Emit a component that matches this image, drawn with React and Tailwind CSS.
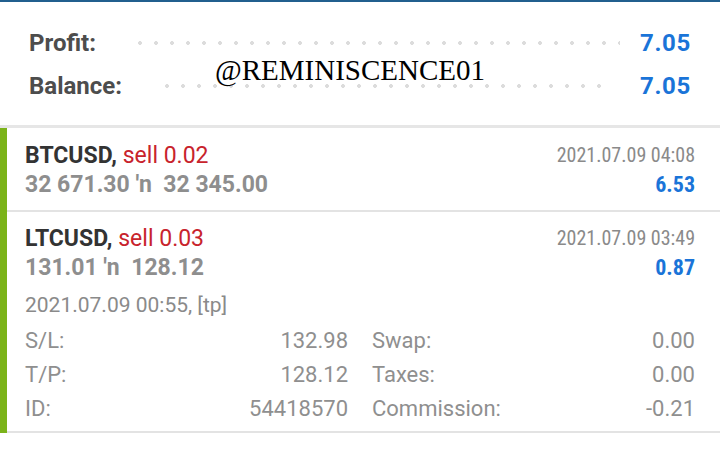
const details = [
  ['S/L:', '132.98', 'Swap:', '0.00'],
  ['T/P:', '128.12', 'Taxes:', '0.00'],
  ['ID:', '54418570', 'Commission:', '-0.21'],
]

function Dots({ className }) {
  return (
    <div
      className={`h-[6px] flex-1 bg-[radial-gradient(circle,#dcdcdc_1.6px,transparent_2.2px)] bg-[length:16px_6px] bg-repeat-x ${className}`}
    />
  )
}

function SummaryRow({ label, value, dotsClass }) {
  return (
    <div className="flex h-[43px] items-center">
      <span className="text-[24px] font-bold text-[#4d4d4d]">{label}</span>
      <Dots className={dotsClass} />
      <span className="text-[24px] font-bold tracking-[0.7px] text-[#1a74d8]">{value}</span>
    </div>
  )
}

function PositionHead({ symbol, side, from, to, time, profit }) {
  return (
    <>
      <div className="flex items-center justify-between leading-[29px]">
        <span className="text-[23px]">
          <span className="font-bold text-[#333]">{symbol}, </span>
          <span className="text-[#c8232c]">{side}</span>
        </span>
        <span className="text-[20px] text-[#8a8a8a] [font-stretch:condensed]">{time}</span>
      </div>
      <div className="flex items-center justify-between leading-[29px]">
        <span className="text-[23px] font-bold text-[#8e8e8e]">
          {from} ′n&nbsp; {to}
        </span>
        <span className="text-[22px] font-bold text-[#1a74d8] [font-stretch:condensed]">{profit}</span>
      </div>
    </>
  )
}

export default function App() {
  return (
    <div className="relative h-[473px] w-[720px] overflow-hidden bg-white font-['Roboto',sans-serif]">
      {/* summary */}
      <div className="border-t-2 border-[#215f8e] px-[29px] pt-[19px] pb-[18px]">
        <SummaryRow label="Profit:" value="7.05" dotsClass="ml-[36px] mr-[20px]" />
        <SummaryRow label="Balance:" value="7.05" dotsClass="ml-[37px] mr-[28px]" />
      </div>
      <div className="h-[3px] bg-[#e6e6e6]" />

      {/* positions */}
      <div className="flex">
        <div className="w-[7px] bg-[#7bb31a]" />
        <div className="flex-1 border-b-2 border-[#e3e3e3] pt-[13px] pb-[11px] pl-[18px] pr-[25px]">
          <PositionHead symbol="BTCUSD" side="sell 0.02" from="32 671.30" to="32 345.00" time="2021.07.09 04:08" profit="6.53" />
        </div>
      </div>
      <div className="flex">
        <div className="w-[7px] bg-[#7bb31a]" />
        <div className="flex-1 border-b-2 border-[#e3e3e3] pt-[12px] pb-[5px] pl-[18px] pr-[25px]">
          <PositionHead symbol="LTCUSD" side="sell 0.03" from="131.01" to="128.12" time="2021.07.09 03:49" profit="0.87" />
          <div className="mt-[9px] text-[21px] leading-[28px] text-[#8a8a8a]">
            2021.07.09 00:55, [tp]
          </div>
          <div className="mt-[5px] grid grid-cols-2 gap-x-6 text-[22px] leading-[34px] text-[#8f8f8f]">
            {details.map(([l1, v1, l2, v2]) => (
              <div key={l1} className="contents">
                <div className="flex justify-between">
                  <span>{l1}</span>
                  <span>{v1}</span>
                </div>
                <div className="flex justify-between">
                  <span>{l2}</span>
                  <span>{v2}</span>
                </div>
              </div>
            ))}
          </div>
        </div>
      </div>

      {/* watermark */}
      <div className="absolute left-[215px] top-[56px] font-['Liberation_Serif',serif] text-[29px] leading-none text-black">
        @REMINISCENCE01
      </div>
    </div>
  )
}
